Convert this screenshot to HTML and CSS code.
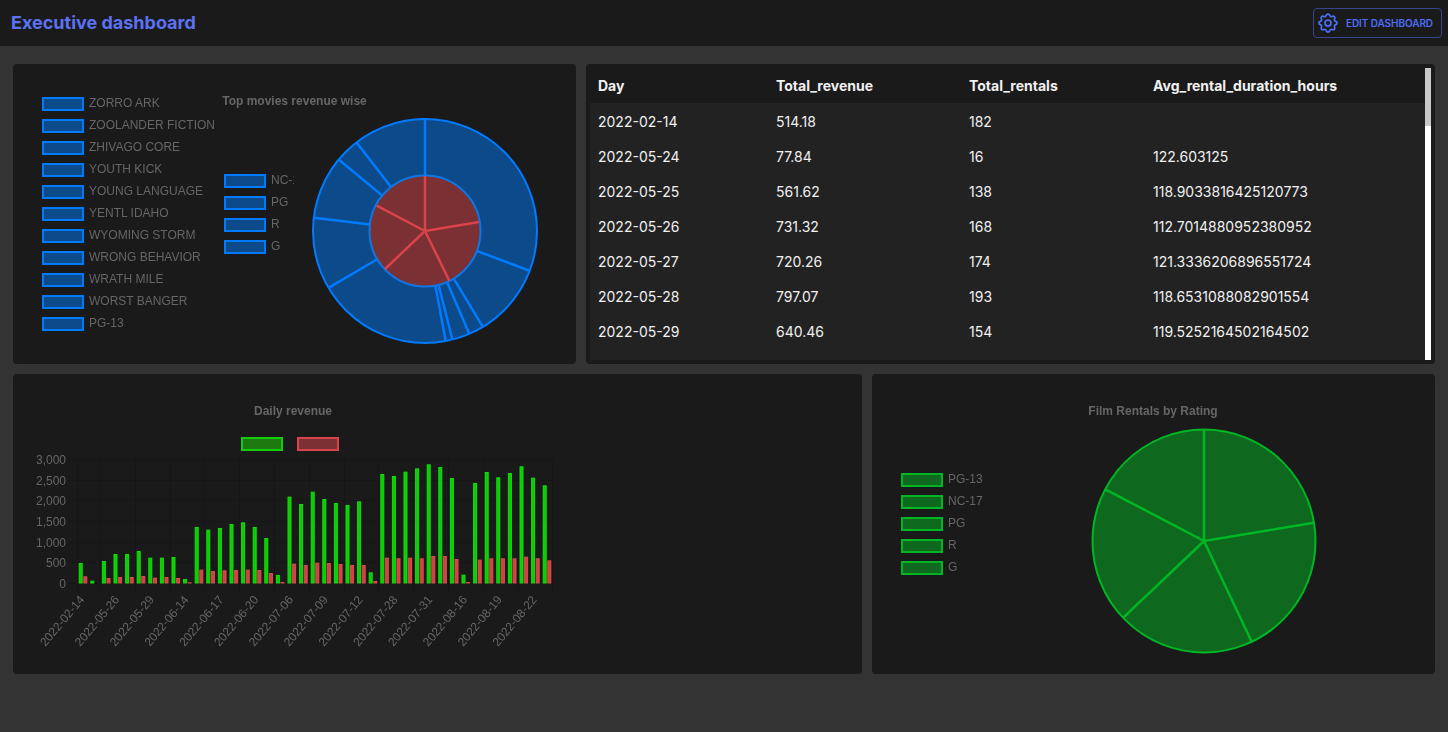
FILE: index.html
```html
<!DOCTYPE html>
<html lang="en">
<head>
    <meta charset="UTF-8">
    <meta name="viewport" content="width=device-width, initial-scale=1.0">
    <title>Executive dashboard</title>
    <link rel="stylesheet" href="styles.css">
</head>
<body>
    <header class="topbar">
        <h1 class="page-title">Executive dashboard</h1>
        <button class="edit-button">
            <svg class="edit-icon" viewBox="0 0 24 24">
                <path d="M10.325 4.317c.426 -1.756 2.924 -1.756 3.35 0a1.724 1.724 0 0 0 2.573 1.066c1.543 -.94 3.31 .826 2.37 2.37a1.724 1.724 0 0 0 1.065 2.572c1.756 .426 1.756 2.924 0 3.35a1.724 1.724 0 0 0 -1.066 2.573c.94 1.543 -.826 3.31 -2.37 2.37a1.724 1.724 0 0 0 -2.572 1.065c-.426 1.756 -2.924 1.756 -3.35 0a1.724 1.724 0 0 0 -2.573 -1.066c-1.543 .94 -3.31 -.826 -2.37 -2.37a1.724 1.724 0 0 0 -1.065 -2.572c-1.756 -.426 -1.756 -2.924 0 -3.35a1.724 1.724 0 0 0 1.066 -2.573c-.94 -1.543 .826 -3.31 2.37 -2.37c1 .608 2.296 .07 2.572 -1.065z"/>
                <circle cx="12" cy="12" r="3"/>
            </svg>
            EDIT DASHBOARD
        </button>
    </header>

    <main class="dashboard">
        <div class="row row-top">
            <section class="panel">
                <svg class="chart" width="563" height="300" viewBox="13 64 563 300">
                    <defs>
                        <clipPath id="legendClip"><rect x="215" y="165" width="78.5" height="100"/></clipPath>
                    </defs>
                    <text class="chart-title" x="294.5" y="105">Top movies revenue wise</text>

                    <g class="swatch-blue">
                        <rect x="43" y="98" width="40" height="12"/>
                        <rect x="43" y="120" width="40" height="12"/>
                        <rect x="43" y="142" width="40" height="12"/>
                        <rect x="43" y="164" width="40" height="12"/>
                        <rect x="43" y="186" width="40" height="12"/>
                        <rect x="43" y="208" width="40" height="12"/>
                        <rect x="43" y="230" width="40" height="12"/>
                        <rect x="43" y="252" width="40" height="12"/>
                        <rect x="43" y="274" width="40" height="12"/>
                        <rect x="43" y="296" width="40" height="12"/>
                        <rect x="43" y="318" width="40" height="12"/>
                        <rect x="225" y="175" width="40" height="12"/>
                        <rect x="225" y="197" width="40" height="12"/>
                        <rect x="225" y="219" width="40" height="12"/>
                        <rect x="225" y="241" width="40" height="12"/>
                    </g>
                    <g class="legend-text">
                        <text x="89" y="107">ZORRO ARK</text>
                        <text x="89" y="129">ZOOLANDER FICTION</text>
                        <text x="89" y="151">ZHIVAGO CORE</text>
                        <text x="89" y="173">YOUTH KICK</text>
                        <text x="89" y="195">YOUNG LANGUAGE</text>
                        <text x="89" y="217">YENTL IDAHO</text>
                        <text x="89" y="239">WYOMING STORM</text>
                        <text x="89" y="261">WRONG BEHAVIOR</text>
                        <text x="89" y="283">WRATH MILE</text>
                        <text x="89" y="305">WORST BANGER</text>
                        <text x="89" y="327">PG-13</text>
                        <g clip-path="url(#legendClip)">
                            <text x="271" y="184">NC-17</text>
                            <text x="271" y="206">PG</text>
                            <text x="271" y="228">R</text>
                            <text x="271" y="250">G</text>
                        </g>
                    </g>

                    <g class="pie-blue">
                        <circle cx="425" cy="231" r="112"/>
                        <line x1="425" y1="175" x2="425" y2="119"/>
                        <line x1="477" y1="251" x2="530" y2="271"/>
                        <line x1="453.6" y1="278.4" x2="482.7" y2="326.7"/>
                        <line x1="446.8" y1="281.6" x2="469" y2="333.3"/>
                        <line x1="438.5" y1="284.6" x2="452.3" y2="339.3"/>
                        <line x1="435.3" y1="285.3" x2="445.7" y2="340.7"/>
                        <line x1="377.6" y1="259" x2="329.3" y2="287.3"/>
                        <line x1="370" y1="224.4" x2="314" y2="217.7"/>
                        <line x1="382.6" y1="195.9" x2="339.3" y2="160"/>
                        <line x1="391" y1="187" x2="356.7" y2="142.7"/>
                    </g>
                    <circle class="pie-core" cx="425" cy="231" r="55.5"/>
                    <g class="pie-red">
                        <line x1="425" y1="231" x2="425" y2="176"/>
                        <line x1="425" y1="231" x2="479" y2="222"/>
                        <line x1="425" y1="231" x2="449.3" y2="280.7"/>
                        <line x1="425" y1="231" x2="385" y2="269"/>
                        <line x1="425" y1="231" x2="376.7" y2="205.7"/>
                    </g>
                </svg>
            </section>

            <section class="panel table-panel">
                <div class="table-scroll">
                    <table class="stats-table">
                        <thead>
                            <tr>
                                <th class="col-day">Day</th>
                                <th class="col-revenue">Total_revenue</th>
                                <th class="col-rentals">Total_rentals</th>
                                <th>Avg_rental_duration_hours</th>
                            </tr>
                        </thead>
                        <tbody>
                            <tr><td>2022-02-14</td><td>514.18</td><td>182</td><td></td></tr>
                            <tr><td>2022-05-24</td><td>77.84</td><td>16</td><td>122.603125</td></tr>
                            <tr><td>2022-05-25</td><td>561.62</td><td>138</td><td>118.9033816425120773</td></tr>
                            <tr><td>2022-05-26</td><td>731.32</td><td>168</td><td>112.7014880952380952</td></tr>
                            <tr><td>2022-05-27</td><td>720.26</td><td>174</td><td>121.3336206896551724</td></tr>
                            <tr><td>2022-05-28</td><td>797.07</td><td>193</td><td>118.6531088082901554</td></tr>
                            <tr><td>2022-05-29</td><td>640.46</td><td>154</td><td>119.5252164502164502</td></tr>
                        </tbody>
                    </table>
                    <div class="scroll-track"><div class="scroll-thumb"></div></div>
                </div>
            </section>
        </div>

        <div class="row row-bottom">
            <section class="panel">
                <svg class="chart" width="849" height="300" viewBox="13 374 849 300">
                    <text class="chart-title" x="293" y="415">Daily revenue</text>
                    <rect class="swatch-lime" x="242" y="438" width="40" height="12"/>
                    <rect class="swatch-red" x="298" y="438" width="40" height="12"/>
                    <g id="grid" class="grid-lines"></g>
                    <g id="yLabels" class="legend-text axis-y"></g>
                    <g id="bars"></g>
                    <g id="xLabels" class="legend-text axis-x"></g>
                </svg>
            </section>

            <section class="panel">
                <svg class="chart" width="563" height="300" viewBox="872 374 563 300">
                    <text class="chart-title" x="1153" y="415">Film Rentals by Rating</text>
                    <g class="swatch-green">
                        <rect x="902" y="474" width="40" height="12"/>
                        <rect x="902" y="496" width="40" height="12"/>
                        <rect x="902" y="518" width="40" height="12"/>
                        <rect x="902" y="540" width="40" height="12"/>
                        <rect x="902" y="562" width="40" height="12"/>
                    </g>
                    <g class="legend-text">
                        <text x="948" y="483">PG-13</text>
                        <text x="948" y="505">NC-17</text>
                        <text x="948" y="527">PG</text>
                        <text x="948" y="549">R</text>
                        <text x="948" y="571">G</text>
                    </g>
                    <g class="pie-green">
                        <circle cx="1204" cy="541" r="111.5"/>
                        <line x1="1204" y1="541" x2="1204" y2="429"/>
                        <line x1="1204" y1="541" x2="1314" y2="522.7"/>
                        <line x1="1204" y1="541" x2="1251.7" y2="641.7"/>
                        <line x1="1204" y1="541" x2="1123.3" y2="617.7"/>
                        <line x1="1204" y1="541" x2="1105.3" y2="489.3"/>
                    </g>
                </svg>
            </section>
        </div>
    </main>
    <script src="charts.js"></script>
</body>
</html>
```
FILE: styles.css
```css
body {
    margin: 0;
    min-height: 100vh;
    background-color: #333333;
    font-family: "Inter", "Liberation Sans", sans-serif;
}
.topbar {
    display: flex;
    align-items: center;
    justify-content: space-between;
    height: 46px;
    padding: 0 6px 0 11px;
    box-sizing: border-box;
    background-color: #1a1a1a;
}
.page-title {
    margin: 0 0 2px;
    font-size: 18px;
    font-weight: 700;
    color: #5c72f5;
}
.edit-button {
    display: flex;
    align-items: center;
    gap: 6px;
    height: 30px;
    padding: 0 8px 0 2px;
    margin-bottom: 1px;
    background: none;
    border: 1px solid #36438f;
    border-radius: 4px;
    font-family: inherit;
    font-size: 10px;
    font-weight: 600;
    letter-spacing: -0.07px;
    color: #4c6ef5;
}
.edit-icon {
    width: 24px;
    height: 24px;
    fill: none;
    stroke: #4c6ef5;
    stroke-width: 1.75;
}
.dashboard {
    display: flex;
    flex-direction: column;
    gap: 10px;
    padding: 18px 13px 0;
}
.row {
    display: grid;
    gap: 10px;
    height: 300px;
}
.row-top {
    grid-template-columns: 563px 849px;
}
.row-bottom {
    grid-template-columns: 849px 563px;
}
.panel {
    background-color: #1a1a1a;
    border-radius: 4px;
    overflow: hidden;
}
.table-panel {
    padding: 4px;
}
.chart {
    display: block;
}
.chart-title {
    font-family: "Liberation Sans", sans-serif;
    font-size: 12px;
    font-weight: 700;
    fill: #666666;
    text-anchor: middle;
    filter: grayscale(1);
}
.legend-text {
    font-family: "Liberation Sans", sans-serif;
    font-size: 12px;
    fill: #666666;
    filter: grayscale(1);
}
.axis-y,
.axis-x {
    text-anchor: end;
}
.swatch-blue,
.pie-blue {
    fill: #0d4a8a;
    stroke: #007bff;
    stroke-width: 2;
}
.pie-blue line {
    stroke-width: 2.5;
}
.pie-core {
    fill: #7b3033;
    stroke: #0f76e6;
    stroke-width: 2;
}
.pie-red {
    stroke: #d9434a;
    stroke-width: 2.5;
}
.swatch-green,
.pie-green {
    fill: #0e691f;
    stroke: #00b624;
    stroke-width: 2;
}
.pie-green line {
    stroke-width: 2.5;
}
.swatch-lime {
    fill: #1d7a10;
    stroke: #14cc0e;
    stroke-width: 2;
}
.swatch-red {
    fill: #7b3033;
    stroke: #d9434a;
    stroke-width: 2;
}
.grid-lines {
    stroke: #161616;
    stroke-width: 1;
}
.bar-green {
    fill: #10c80a;
    stroke: #10e006;
    stroke-width: 1;
}
.bar-red {
    fill: #cc4342;
    stroke: #e04a4e;
    stroke-width: 1;
}

.table-scroll {
    display: flex;
    align-items: flex-start;
    height: 292px;
    background-color: #222222;
    overflow: hidden;
}
.stats-table {
    width: 835px;
    border-collapse: collapse;
    table-layout: fixed;
    font-size: 14px;
    line-height: 17px;
    color: #f1f1f1;
}
.stats-table th {
    padding: 9px 8px;
    text-align: left;
    font-weight: 700;
    background-color: #1a1a1a;
}
.stats-table td {
    padding: 10px 8px 8px;
    vertical-align: top;
}
.col-day {
    width: 162px;
}
.col-revenue {
    width: 177px;
}
.col-rentals {
    width: 168px;
}
.scroll-track {
    width: 6px;
    height: 100%;
    background-color: #ffffff;
}
.scroll-thumb {
    height: 58px;
    background-color: #c8c8c8;
}
```
FILE: charts.js
```js
const svgNS = 'http://www.w3.org/2000/svg';

const revenue = [484, 56, 532, 702, 702, 774, 613, 613, 629, 97, 1355, 1290, 1331, 1427, 1468, 1355, 1089, 194, 2089, 1911, 2210, 2032, 1936, 1887, 1976, 258, 2637, 2589, 2694, 2774, 2871, 2807, 2540, 202, 2419, 2686, 2557, 2661, 2823, 2549, 2363];
const rentals = [161, 0, 121, 145, 145, 169, 129, 145, 121, 16, 323, 290, 306, 315, 323, 315, 242, 24, 468, 436, 492, 484, 460, 436, 436, 48, 613, 597, 613, 597, 653, 653, 581, 24, 565, 597, 597, 597, 637, 597, 548];
const dayLabels = ['2022-02-14', '2022-05-26', '2022-05-29', '2022-06-14', '2022-06-17', '2022-06-20', '2022-07-06', '2022-07-09', '2022-07-12', '2022-07-28', '2022-07-31', '2022-08-16', '2022-08-19', '2022-08-22'];

const baseY = 583;
const scale = 124 / 3000;

function addShape(parent, tag, attrs, text) {
  const el = document.createElementNS(svgNS, tag);
  for (const key in attrs) {
    el.setAttribute(key, attrs[key]);
  }
  if (text) {
    el.textContent = text;
  }
  parent.appendChild(el);
}

function addBar(parent, x, value, className) {
  const h = value * scale;
  if (h > 0) {
    addShape(parent, 'rect', { class: className, x: x + 0.5, y: baseY - h + 0.5, width: 3, height: h - 0.5 });
  }
}

const grid = document.getElementById('grid');
const yLabels = document.getElementById('yLabels');
for (let i = 0; i <= 6; i++) {
  const y = Math.round(baseY - i * 500 * scale) + 0.5;
  addShape(grid, 'line', { x1: 68, y1: y, x2: 552, y2: y });
  addShape(yLabels, 'text', { x: 66, y: y + 4 }, (i * 500).toLocaleString('en-US'));
}
addShape(grid, 'line', { x1: 77.5, y1: 459, x2: 77.5, y2: 592 });
for (let k = 0; k < 14; k++) {
  const x = Math.round(100 + k * 34.8) + 0.5;
  addShape(grid, 'line', { x1: x, y1: 459, x2: x, y2: 592 });
}

const bars = document.getElementById('bars');
revenue.forEach((value, i) => {
  addBar(bars, 78.7 + i * 11.6, value, 'bar-green');
  addBar(bars, 83.3 + i * 11.6, rentals[i], 'bar-red');
});

const xLabels = document.getElementById('xLabels');
dayLabels.forEach((label, i) => {
  const x = 85 + i * 34.8;
  addShape(xLabels, 'text', { x: x, y: 600, transform: 'rotate(-50 ' + x + ' 600)' }, label);
});
```
